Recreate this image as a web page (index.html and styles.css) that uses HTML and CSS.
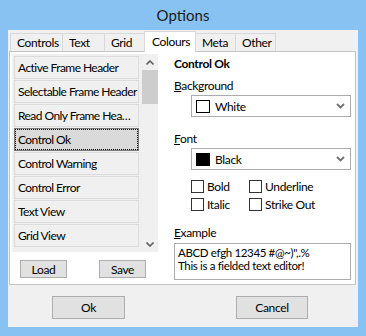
FILE: index.html
```html
<!DOCTYPE html>
<html lang="en">

<head>
  <meta charset="UTF-8" />
  <title>Options</title>
  <link rel="stylesheet" href="styles.css">
</head>

<body>
  <div class="window">
    <div class="titlebar">Options</div>
    <div class="client">
      <div class="tab-strip">
        <span class="tab w-controls">Controls</span>
        <span class="tab w-text">Text</span>
        <span class="tab w-grid">Grid</span>
        <span class="tab active w-colours">Colours</span>
        <span class="tab w-meta">Meta</span>
        <span class="tab w-other">Other</span>
      </div>
      <div class="panel">
        <div class="left">
          <div class="list">
            <div class="items">
              <div class="item">Active Frame Header</div>
              <div class="item">Selectable Frame Header</div>
              <div class="item">Read Only Frame Hea…</div>
              <div class="item selected">Control Ok</div>
              <div class="item">Control Warning</div>
              <div class="item">Control Error</div>
              <div class="item">Text View</div>
              <div class="item">Grid View</div>
            </div>
            <div class="scrollbar">
              <span class="arrow">
                <svg width="8" height="5" viewBox="0 0 8 5"><polyline points="0.5,4.5 4,1 7.5,4.5" fill="none" stroke="#606060" stroke-width="1.6" /></svg>
              </span>
              <span class="thumb"></span>
              <span class="track"></span>
              <span class="arrow">
                <svg width="8" height="5" viewBox="0 0 8 5"><polyline points="0.5,0.5 4,4 7.5,0.5" fill="none" stroke="#606060" stroke-width="1.6" /></svg>
              </span>
            </div>
          </div>
          <div class="list-buttons">
            <button class="btn small">Load</button>
            <button class="btn small">Save</button>
          </div>
        </div>

        <div class="right">
          <div class="heading">Control Ok</div>

          <div class="label first"><u>B</u>ackground</div>
          <div class="select">
            <span class="swatch white"></span>
            <span class="select-text">White</span>
            <svg class="chevron" width="9" height="6" viewBox="0 0 9 6"><polyline points="1,1 4.5,4.5 8,1" fill="none" stroke="#707070" stroke-width="1.8" /></svg>
          </div>

          <div class="label"><u>F</u>ont</div>
          <div class="select">
            <span class="swatch black"></span>
            <span class="select-text">Black</span>
            <svg class="chevron" width="9" height="6" viewBox="0 0 9 6"><polyline points="1,1 4.5,4.5 8,1" fill="none" stroke="#707070" stroke-width="1.8" /></svg>
          </div>

          <div class="checks">
            <label class="check"><span class="box"></span>Bold</label>
            <label class="check"><span class="box"></span>Underline</label>
            <label class="check"><span class="box"></span>Italic</label>
            <label class="check"><span class="box"></span>Strike Out</label>
          </div>

          <div class="label"><u>E</u>xample</div>
          <div class="example">
            <div class="example-line">ABCD efgh 12345 #@~)",.%</div>
            <div class="example-line">This is a fielded text editor!</div>
          </div>
        </div>
      </div>

      <div class="dialog-buttons">
        <button class="btn big ok">Ok</button>
        <button class="btn big cancel">Cancel</button>
      </div>
    </div>
  </div>
</body>

</html>
```

FILE: styles.css
```css
body {
  margin: 0;
  font-family: Lato, 'Liberation Sans', sans-serif;
  font-size: 12px;
  letter-spacing: -0.35px;
  color: #000;
}

.window {
  width: 366px;
  height: 336px;
  box-sizing: border-box;
  background: #88c2f3;
  padding: 0 8px 9px 8px;
  display: flex;
  flex-direction: column;
}

.titlebar {
  height: 30px;
  line-height: 30px;
  text-align: center;
  font-size: 15px;
  letter-spacing: 0;
  color: #1a1a1a;
}

.client {
  flex: 1;
  background: #f0f0f0;
  display: flex;
  flex-direction: column;
}

/* tabs */
.tab-strip {
  display: flex;
  align-items: flex-end;
  height: 21px;
  margin: 1px 0 0 2px;
}

.tab {
  box-sizing: border-box;
  height: 19px;
  line-height: 17px;
  padding-left: 6px;
  border: 1px solid #d9d9d9;
  border-bottom: none;
  margin-right: -1px;
  background: #f0f0f0;
}

.tab.active {
  height: 21px;
  line-height: 19px;
  background: #fff;
  position: relative;
  z-index: 1;
  padding-left: 7px;
}

.w-controls { width: 53px; }
.w-text { width: 43px; }
.w-grid { width: 41px; }
.w-colours { width: 52px; }
.w-meta { width: 41px; }
.w-other { width: 41px; }

.panel {
  display: flex;
  height: 234px;
  box-sizing: border-box;
  margin: -1px 2px 0 1px;
  border: 1px solid #c4c4c4;
  background: #fff;
  padding: 2px 0 0 2px;
}

/* left list */
.left {
  width: 146px;
}

.list {
  display: flex;
  height: 198px;
  background: #f0f0f0;
  overflow: hidden;
}

.items {
  width: 130px;
  padding: 2px 0 0 2px;
  box-sizing: border-box;
}

.item {
  box-sizing: border-box;
  width: 125px;
  height: 23px;
  line-height: 21px;
  margin-bottom: 1px;
  padding-left: 3px;
  border: 1px solid #dcdcdc;
  white-space: nowrap;
  overflow: hidden;
  letter-spacing: -0.55px;
}

.item.selected {
  background: #dadada;
  border: 1px solid #7a7a7a;
  outline: 1px dotted #000;
  outline-offset: -2px;
}

.scrollbar {
  width: 16px;
  display: flex;
  flex-direction: column;
  background: #f0f0f0;
}

.arrow {
  height: 16px;
  display: flex;
  align-items: center;
  justify-content: center;
}

.thumb {
  height: 34px;
  background: #cdcdcd;
}

.track {
  flex: 1;
}

.list-buttons {
  display: flex;
  gap: 32px;
  margin: 8px 0 0 8px;
}

.btn {
  font-family: inherit;
  font-size: 12px;
  letter-spacing: -0.35px;
  color: #000;
  background: #e1e1e1;
  border: 1px solid #adadad;
  padding: 0;
  box-sizing: border-box;
}

.btn.small {
  width: 47px;
  height: 18px;
}

/* right side */
.right {
  width: 177px;
  margin-left: 16px;
  padding-top: 2px;
}

.heading {
  font-weight: bold;
  line-height: 15px;
}

.label {
  line-height: 14px;
  margin-top: 15px;
}

.label.first {
  margin-top: 8px;
}

.select {
  box-sizing: border-box;
  display: flex;
  align-items: center;
  height: 22px;
  width: 160px;
  margin: 2px 0 0 17px;
  border: 1px solid #acacac;
  background: #fff;
  padding-left: 4px;
}

.swatch {
  box-sizing: border-box;
  width: 14px;
  height: 13px;
  border: 1px solid #000;
}

.swatch.white { background: #fff; }
.swatch.black { background: #000; }

.select-text {
  flex: 1;
  margin-left: 5px;
}

.chevron {
  margin-right: 5px;
}

.checks {
  display: grid;
  grid-template-columns: 58px auto;
  row-gap: 5px;
  margin: 10px 0 0 17px;
}

.check {
  display: flex;
  align-items: center;
  height: 13px;
}

.box {
  box-sizing: border-box;
  width: 13px;
  height: 13px;
  border: 1px solid #333;
  background: #fff;
  margin-right: 3px;
}

.example {
  box-sizing: border-box;
  height: 37px;
  margin-top: 3px;
  border: 1px solid #acacac;
  padding: 2px 0 0 3px;
}

.example-line {
  height: 13px;
  line-height: 13px;
  font-size: 11.5px;
}

/* dialog buttons */
.dialog-buttons {
  display: flex;
  margin: 11px 0 0 44px;
}

.btn.big {
  height: 23px;
}

.btn.ok { width: 73px; }

.btn.cancel {
  width: 72px;
  margin-left: 111px;
}
```
